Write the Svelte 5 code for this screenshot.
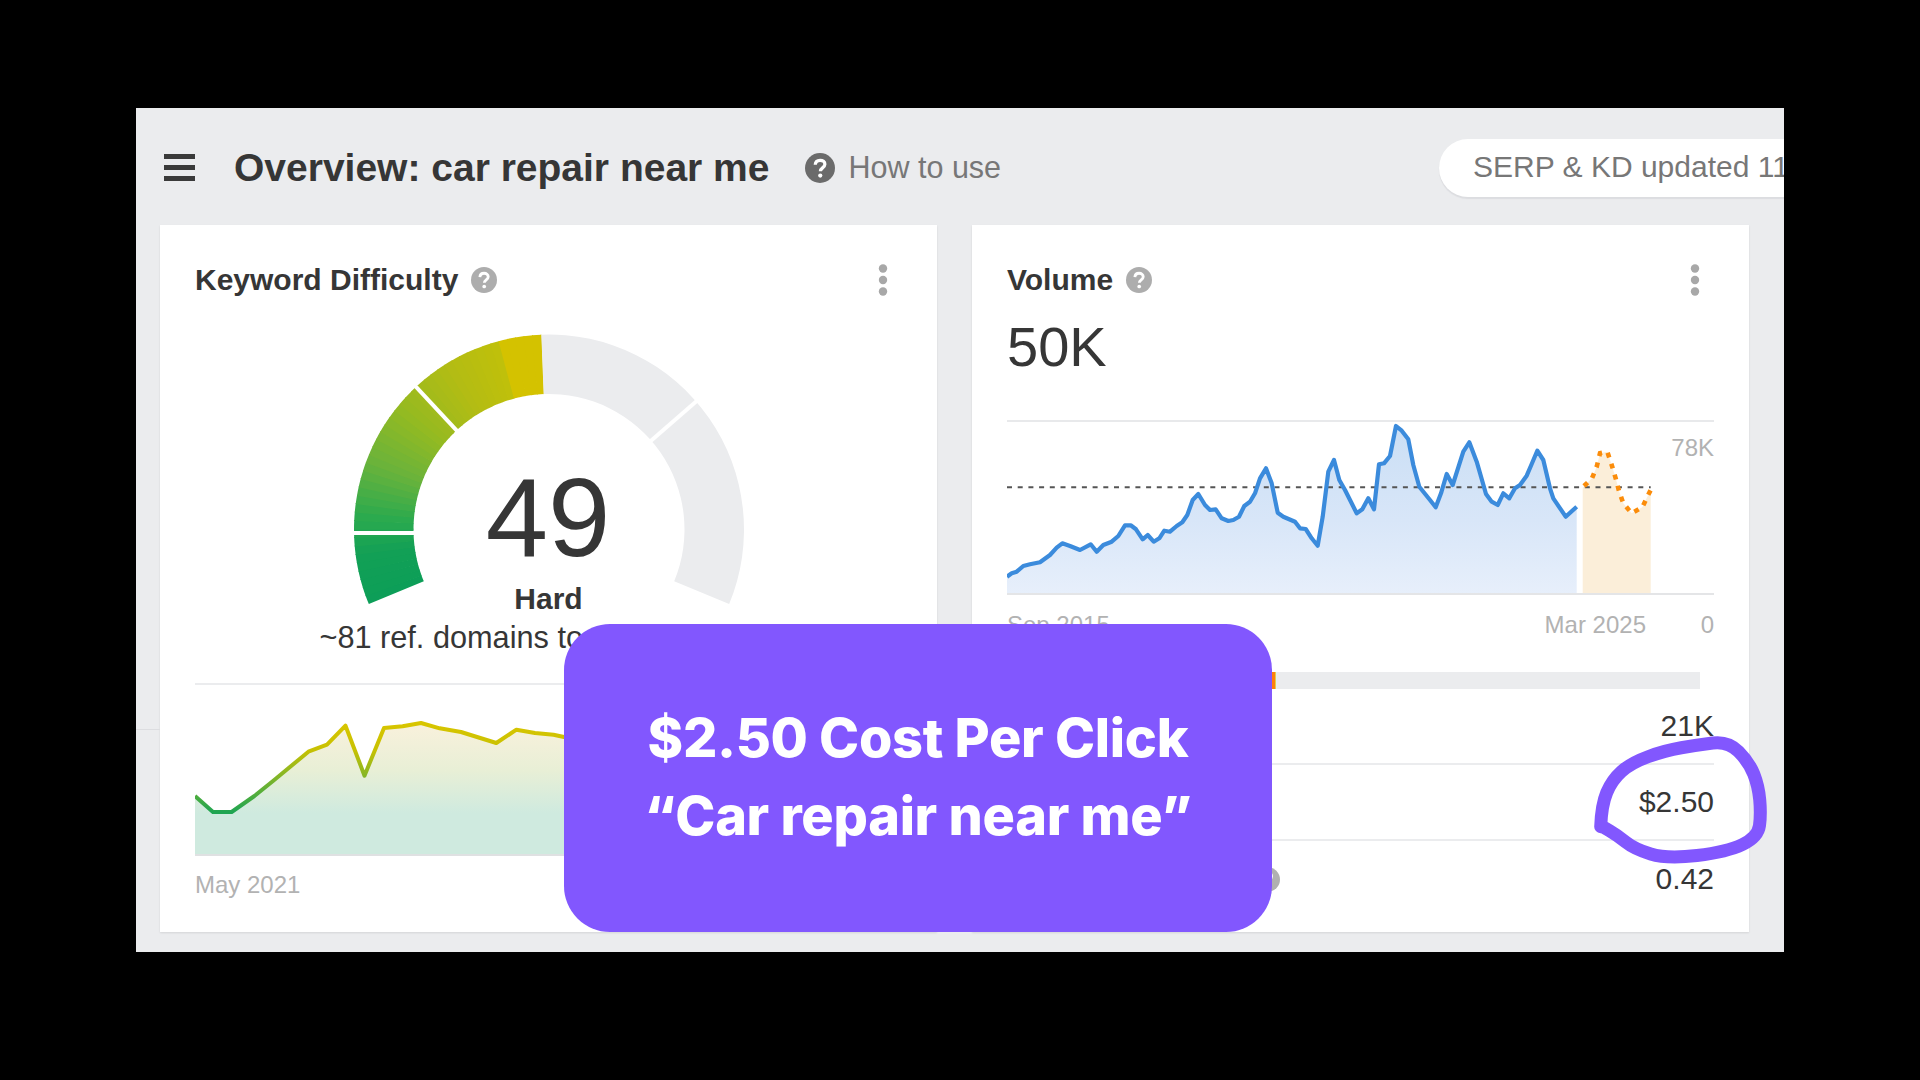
<script lang="ts">
  // gauge geometry, angles in degrees, 0 = right, counter-clockwise
  const cx = 354;
  const cy = 209.5;
  const rOut = 195;
  const rIn = 135.5;

  const stops: [number, number[]][] = [
    [202.5, [13, 158, 88]],
    [188, [18, 160, 86]],
    [176, [44, 170, 78]],
    [160, [104, 179, 60]],
    [140, [150, 186, 32]],
    [122, [178, 188, 20]],
    [105, [192, 192, 10]],
    [104.5, [212, 194, 0]],
    [92, [212, 194, 0]],
  ];

  function colorAt(a: number) {
    for (let i = 0; i < stops.length - 1; i++) {
      const [a0, c0] = stops[i];
      const [a1, c1] = stops[i + 1];
      if (a <= a0 && a >= a1) {
        const t = (a0 - a) / (a0 - a1);
        const c = c0.map((v, k) => Math.round(v + (c1[k] - v) * t));
        return `rgb(${c[0]},${c[1]},${c[2]})`;
      }
    }
    return "#d4c200";
  }

  function pt(r: number, a: number) {
    const rad = (a * Math.PI) / 180;
    return `${(cx + r * Math.cos(rad)).toFixed(2)} ${(cy - r * Math.sin(rad)).toFixed(2)}`;
  }

  function arc(from: number, to: number) {
    const large = from - to > 180 ? 1 : 0;
    return `M${pt(rOut, from)}A${rOut} ${rOut} 0 ${large} 1 ${pt(rOut, to)}L${pt(rIn, to)}A${rIn} ${rIn} 0 ${large} 0 ${pt(rIn, from)}Z`;
  }

  const slices: { d: string; fill: string }[] = [];
  for (let a = 202.5; a > 92.25; a -= 2.5) {
    const end = Math.max(a - 2.8, 92.25);
    slices.push({ d: arc(a, end), fill: colorAt(a - 1.25) });
  }

  function gap(a: number) {
    const rad = (a * Math.PI) / 180;
    return {
      x1: cx + (rIn - 3) * Math.cos(rad),
      y1: cy - (rIn - 3) * Math.sin(rad),
      x2: cx + (rOut + 3) * Math.cos(rad),
      y2: cy - (rOut + 3) * Math.sin(rad),
    };
  }
  const gaps = [
    { x1: 150, y1: 213, x2: 222, y2: 213 },
    ...[133, 41].map(gap),
  ];

  const kd = [
    [0, 107], [18, 123], [36.6, 123], [59.4, 107], [78, 92], [113.4, 62.7], [132, 55.7], [150.5, 36.7],
    [169.5, 86.7], [189, 39], [207.6, 37.3], [226, 34], [244.7, 39.3], [266, 43], [301.3, 54], [321.4, 40.7],
    [340, 44], [358.5, 45.7], [369, 48], [400, 52], [440, 48], [480, 60], [520, 56], [560, 66], [600, 58],
    [640, 70], [707, 64],
  ];

  const volume = [
    [0, 166.7], [4.7, 163.3], [9.7, 161.7], [16.3, 156], [23, 154.3], [33, 152.3], [43, 145], [49.7, 137.7],
    [55.3, 133.3], [63, 136], [73, 140], [83.7, 134.3], [89.7, 141.7], [96.3, 135], [104.7, 131.7], [111.3, 126],
    [118, 115.3], [123.7, 115.3], [129, 119.3], [135.7, 129.3], [140.7, 125], [146.7, 131.7], [152.3, 128.3],
    [157.3, 120.7], [163, 121.7], [169.7, 116], [175.3, 112.3], [180.3, 105], [185.7, 90], [191.3, 84], [198, 95],
    [203, 100], [208.7, 99.3], [214.7, 108.3], [221.3, 111], [226.3, 110], [232, 106.7], [237.3, 96], [243, 91.7],
    [248, 83.3], [253, 68.3], [259, 58.3], [264.7, 73.3], [270.7, 102.7], [276.3, 106.7], [288, 111.7], [293, 118.3],
    [298.7, 119], [304.7, 128.3], [310.7, 135.7], [315.7, 106.7], [321.3, 61.7], [327, 50], [332.3, 70], [338, 80],
    [349.7, 103.3], [355.3, 99.3], [361.3, 88.3], [367, 99.3], [372, 54.3], [377, 53.3], [383, 46], [389, 16],
    [394.7, 20.7], [401.3, 29.3], [406.3, 55], [412.3, 76.7], [423, 90], [428.7, 97.3], [434, 83.3], [439.7, 64],
    [445.7, 75], [456.3, 41.7], [462.3, 32.3], [469.7, 51.7], [479, 84], [484.7, 91.7], [490.7, 95], [496.3, 83.3],
    [502.3, 88.3], [508, 78.3], [513, 75], [519.7, 65.7], [524.7, 54], [530.3, 40.7], [536.3, 50], [543, 78.3],
    [546.3, 88.3], [558.7, 106.7], [569.7, 96.7],
  ];

  const forecast = [
    [577, 76], [585, 68.3], [589.7, 56.7], [593, 43.3], [600.3, 41.7], [604.7, 55], [608.7, 68.3], [612, 81],
    [616.3, 93.3], [624.7, 103.3], [635.3, 97.3], [640.7, 86], [643.7, 80],
  ];

  const line = (pts: number[][]) => pts.map((p) => p.join(",")).join(" ");
  const area = (pts: number[][], base: number) =>
    `${pts[0][0]},${base} ${line(pts)} ${pts[pts.length - 1][0]},${base}`;

  // hand drawn ring round the CPC value, smoothed through the midpoints
  const ring = [
    [10.7, 92.7], [11.5, 71], [22, 46], [41, 29], [75, 16.5], [107.5, 11], [138, 7], [159, 28],
    [168.5, 52], [171, 80], [168, 103], [137, 118], [77, 125], [44.4, 115], [27, 101], [12.6, 92.7],
  ];
  function smooth(pts: number[][]) {
    let d = `M${pts[0][0]} ${pts[0][1]}`;
    for (let i = 1; i < pts.length - 1; i++) {
      const mx = (pts[i][0] + pts[i + 1][0]) / 2;
      const my = (pts[i][1] + pts[i + 1][1]) / 2;
      d += `Q${pts[i][0]} ${pts[i][1]} ${mx} ${my}`;
    }
    const last = pts[pts.length - 1];
    return d + `L${last[0]} ${last[1]}`;
  }

  const metrics = [
    { label: "Clicks", value: "21K", help: false },
    { label: "Cost per click", value: "$2.50", help: false },
    { label: "Clicks per search", value: "0.42", help: true },
  ];
</script>

{#snippet help(cls: string)}
  <svg class={cls} viewBox="0 0 24 24" aria-hidden="true">
    <circle cx="12" cy="12" r="12" fill="currentColor" />
    <path d="M8.2 9.4c.1-2.3 1.7-3.6 3.9-3.6 2.2 0 3.8 1.3 3.8 3.2 0 2.9-3.6 2.9-3.6 5.6" fill="none" stroke="#fff" stroke-width="2.6" />
    <circle cx="12.2" cy="18" r="1.7" fill="#fff" />
  </svg>
{/snippet}

{#snippet kebab()}
  <svg class="kebab" viewBox="0 0 10 32" aria-hidden="true">
    <circle cx="5" cy="4.5" r="4.2" />
    <circle cx="5" cy="16" r="4.2" />
    <circle cx="5" cy="27.5" r="4.2" />
  </svg>
{/snippet}

<div class="page">
  <div class="screen">
    <header class="top">
      <div class="burger"><span></span><span></span><span></span></div>
      <h1>Overview: car repair near me</h1>
      {@render help("help-big")}
      <span class="howto">How to use</span>
      <div class="pill">SERP &amp; KD updated 11 days ago</div>
    </header>

    <div class="cards">
      <section class="card">
        <div class="card-head">
          <h2>Keyword Difficulty</h2>
          {@render help("help-small")}
          {@render kebab()}
        </div>

        <svg class="gauge" viewBox="0 0 707 300" aria-label="Keyword difficulty gauge">
          {#each slices as s}
            <path d={s.d} fill={s.fill} />
          {/each}
          <path d={arc(92.25, -22.5)} fill="#ebecee" />
          {#each gaps as g}
            <line x1={g.x1} y1={g.y1} x2={g.x2} y2={g.y2} stroke="#fff" stroke-width="4" />
          {/each}
          <text class="kd-num" x="353" y="236" text-anchor="middle">49</text>
          <text class="kd-label" x="353.5" y="289" text-anchor="middle">Hard</text>
        </svg>
        <p class="domains">~81 ref. domains to rank in top 10</p>

        <svg class="kd-chart" viewBox="0 0 707 180" aria-hidden="true">
          <defs>
            <linearGradient id="kdFill" gradientUnits="userSpaceOnUse" x1="0" y1="34" x2="0" y2="140">
              <stop offset="0" stop-color="#f9f1dc" />
              <stop offset="0.45" stop-color="#e8efd6" />
              <stop offset="0.85" stop-color="#cfeadf" />
            </linearGradient>
            <linearGradient id="kdLine" gradientUnits="userSpaceOnUse" x1="0" y1="34" x2="0" y2="123">
              <stop offset="0" stop-color="#d8c500" />
              <stop offset="0.3" stop-color="#c8c102" />
              <stop offset="0.62" stop-color="#7fb52a" />
              <stop offset="1" stop-color="#1fa552" />
            </linearGradient>
          </defs>
          <polygon points={area(kd, 166)} fill="url(#kdFill)" />
          <polyline points={line(kd)} fill="none" stroke="url(#kdLine)" stroke-width="4" stroke-linejoin="round" />
          <line x1="0" y1="166" x2="707" y2="166" stroke="#dfe1e2" stroke-width="2" />
        </svg>
        <div class="axis"><span>May 2021</span></div>
      </section>

      <section class="card">
        <div class="card-head">
          <h2>Volume</h2>
          {@render help("help-small")}
          {@render kebab()}
        </div>
        <div class="big">50K</div>

        <svg class="vol-chart" viewBox="0 0 707 190" aria-hidden="true">
          <defs>
            <linearGradient id="volFill" gradientUnits="userSpaceOnUse" x1="0" y1="20" x2="0" y2="184">
              <stop offset="0" stop-color="#cbdff5" />
              <stop offset="0.55" stop-color="#d8e6f8" />
              <stop offset="1" stop-color="#e7effb" />
            </linearGradient>
          </defs>
          <line x1="0" y1="11" x2="707" y2="11" stroke="#e8e9eb" stroke-width="2" />
          <polygon points={area(volume, 184)} fill="url(#volFill)" />
          <polygon points="575.7,184 575.7,78 {line(forecast)} 643.7,184" fill="#fbeed9" />
          <line x1="0" y1="184" x2="707" y2="184" stroke="#e4e5e7" stroke-width="2" />
          <line x1="0" y1="77.3" x2="643.7" y2="77.3" stroke="#555" stroke-width="2" stroke-dasharray="5 5.7" />
          <polyline points={line(volume)} fill="none" stroke="#3b8bdc" stroke-width="4.2" stroke-linejoin="round" />
          <polyline points={line(forecast)} fill="none" stroke="#fb8c0a" stroke-width="4.6" stroke-dasharray="5 6.5" />
          <text class="ymax" x="707" y="46" text-anchor="end">78K</text>
        </svg>

        <div class="axis vol-axis">
          <span>Sep 2015</span>
          <span class="axis-end">Mar 2025</span>
          <span class="axis-zero">0</span>
        </div>

        <div class="bar"><div class="bar-fill"></div></div>

        {#each metrics as m}
          <div class="metric">
            <span class="metric-label">{m.label}</span>
            {#if m.help}{@render help("help-row")}{/if}
            <span class="metric-value">{m.value}</span>
          </div>
        {/each}
      </section>
    </div>

    <svg class="scribble" viewBox="0 0 180 132" aria-hidden="true">
      <path d={smooth(ring)} fill="none" stroke="#8257fe" stroke-width="13" stroke-linejoin="round" stroke-linecap="round" />
    </svg>

    <div class="promo">
      <p>$2.50 Cost Per Click</p>
      <p>“Car repair near me”</p>
    </div>
  </div>
</div>

<style>
  :global(body) {
    background: #000;
  }
  .page {
    box-sizing: border-box;
    width: 1920px;
    height: 1080px;
    padding: 108px 136px 128px;
    background: #000;
    font-family: "Liberation Sans", Arial, sans-serif;
    color: #363636;
  }
  .screen {
    position: relative;
    width: 1648px;
    height: 844px;
    overflow: hidden;
    background: #ebecee;
  }
  .screen::before {
    content: "";
    position: absolute;
    left: 0;
    top: 621px;
    width: 24px;
    height: 1px;
    background: #dcdde0;
  }

  .top {
    display: flex;
    align-items: center;
    height: 117px;
    padding: 2px 0 0 28px;
    box-sizing: border-box;
    white-space: nowrap;
  }
  .burger {
    display: flex;
    flex-direction: column;
    gap: 6.8px;
    width: 30.5px;
    flex: none;
  }
  .burger span {
    height: 4.3px;
    background: #3a3a3a;
  }
  h1 {
    margin: 0 0 0 39.5px;
    font-size: 39px;
    font-weight: 700;
    color: #363636;
  }
  .help-big {
    width: 30px;
    height: 30px;
    margin-left: 36px;
    flex: none;
    color: #6b6b6b;
  }
  .howto {
    margin-left: 13px;
    font-size: 30.5px;
    color: #777;
  }
  .pill {
    flex: none;
    box-sizing: border-box;
    height: 58px;
    margin-left: 438px;
    padding: 0 34px;
    line-height: 56px;
    font-size: 30px;
    color: #777;
    background: #fff;
    border-radius: 29px;
    box-shadow: 0 2px 1px #dcdde0;
  }

  .cards {
    display: grid;
    grid-template-columns: 777px 777px;
    gap: 35px;
    height: 707px;
    padding-left: 24px;
  }
  .card {
    box-sizing: border-box;
    padding: 35px 35px 0;
    background: #fff;
    box-shadow: 0 1px 2px rgba(0, 0, 0, 0.1);
  }
  .card-head {
    display: flex;
    align-items: center;
    height: 40px;
  }
  h2 {
    margin: 0;
    font-size: 30px;
    font-weight: 700;
    color: #363636;
  }
  .help-small {
    width: 26px;
    height: 26px;
    margin-left: 13px;
    color: #adadad;
  }
  .kebab {
    width: 10px;
    height: 32px;
    margin-left: auto;
    margin-right: 14px;
    fill: #a8a8a8;
  }

  .gauge {
    display: block;
    width: 707px;
    height: 300px;
    margin-top: 20px;
  }
  .kd-num {
    font-size: 112px;
    fill: #363636;
  }
  .kd-label {
    font-size: 30px;
    font-weight: 700;
    fill: #363636;
  }
  .domains {
    margin: 0;
    height: 36px;
    line-height: 36px;
    font-size: 30.7px;
    text-align: center;
    white-space: nowrap;
  }
  .kd-chart {
    display: block;
    width: 707px;
    height: 180px;
    margin-top: 27px;
    border-top: 2px solid #ebecee;
    padding-top: 4px;
    box-sizing: content-box;
  }
  .axis {
    display: flex;
    height: 30px;
    line-height: 30px;
    font-size: 24px;
    color: #b2b2b2;
  }
  .card:first-child .axis {
    padding-top: 1px;
  }

  .big {
    margin-top: 17px;
    height: 60px;
    line-height: 60px;
    font-size: 56px;
    color: #363636;
  }
  .vol-chart {
    display: block;
    width: 707px;
    height: 190px;
    margin-top: 33px;
  }
  .ymax {
    font-size: 24px;
    fill: #b2b2b2;
  }
  .vol-axis {
    margin-top: 10px;
  }
  .axis-end {
    margin-left: auto;
  }
  .axis-zero {
    width: 68px;
    text-align: right;
  }
  .bar {
    width: 693px;
    height: 17px;
    margin-top: 32px;
    background: #ebecee;
  }
  .bar-fill {
    width: 268px;
    height: 100%;
    background: #ff7f0f;
    border-right: 1px solid #e5cf4d;
  }
  .metric {
    box-sizing: border-box;
    display: flex;
    align-items: center;
    height: 76px;
    font-size: 30px;
    color: #363636;
    border-bottom: 2px solid #ebecee;
  }
  .metric:last-child {
    border-bottom: none;
  }
  .help-row {
    width: 25px;
    height: 25px;
    margin-left: 18px;
    color: #b0b0b0;
  }
  .metric-value {
    margin-left: auto;
  }

  .scribble {
    position: absolute;
    left: 1454px;
    top: 626px;
    width: 180px;
    height: 132px;
  }
  .promo {
    position: absolute;
    left: 428px;
    top: 516px;
    width: 708px;
    height: 308px;
    box-sizing: border-box;
    padding-bottom: 2px;
    display: flex;
    flex-direction: column;
    justify-content: center;
    background: #8257fe;
    border-radius: 46px;
    color: #fff;
    font-family: Inter, "Liberation Sans", sans-serif;
    font-size: 54px;
    font-weight: 800;
    letter-spacing: -0.3px;
    text-align: center;
  }
  .promo p {
    margin: 0;
    line-height: 78px;
  }
</style>
